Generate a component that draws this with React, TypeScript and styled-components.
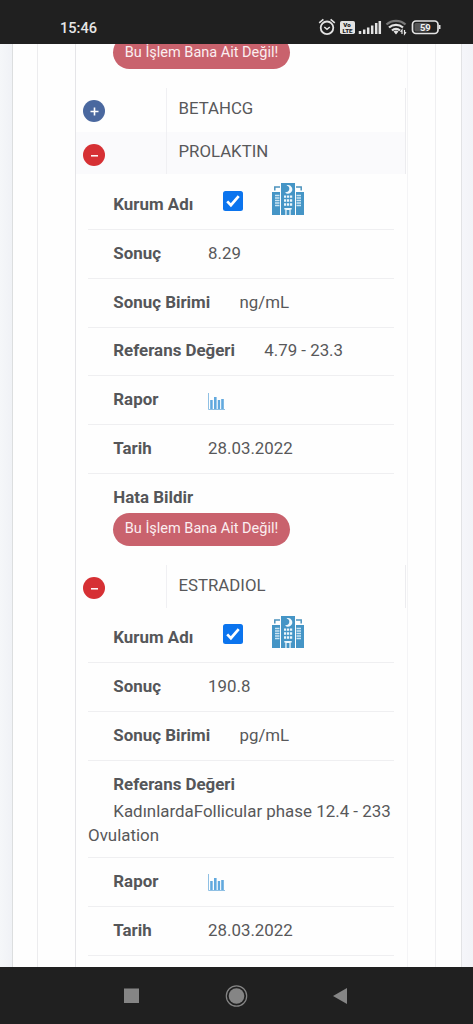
import React from "react";
import styled, { createGlobalStyle } from "styled-components";

const GlobalStyle = createGlobalStyle`
  * { box-sizing: border-box; }
  body { margin: 0; background: #202020; font-family: Roboto, "Liberation Sans", sans-serif; }
`;

const Screen = styled.div`
  width: 473px;
  height: 1024px;
  display: flex;
  flex-direction: column;
  overflow: hidden;
`;

const StatusBar = styled.header`
  height: 44px;
  flex: none;
  background: #202020;
  color: #e6e6e6;
  display: flex;
  justify-content: space-between;
  padding: 18px 31px 0 60px;
`;

const Clock = styled.span`
  font-size: 14.6px;
  font-weight: 500;
  line-height: 20px;
`;

const StatusIcons = styled.div`
  display: flex;
  height: 18px;
`;

const Viewport = styled.main`
  flex: 1;
  min-height: 0;
  overflow: hidden;
  display: flex;
  padding: 0 11px 0 12px;
  background: linear-gradient(90deg, #f5f7f9, #f0f2f6 12px, #f5f6fa 461px, #f2f3f7);
`;

const Card = styled.section`
  flex: 1;
  display: flex;
  padding: 0 25px 0 24px;
  background: #fefefe;
  border-left: 1px solid #dcdedf;
  border-right: 1px solid #e2e3e5;
`;

const Frame = styled.div`
  flex: 1;
  display: flex;
  padding: 0 27px 0 37px;
  border-left: 1px solid #ececee;
  border-right: 1px solid #efeff1;
`;

const Table = styled.div`
  flex: 1;
  min-width: 0;
  border-left: 1px solid #e5e5e8;
  border-right: 1px solid #f4f4f6;
`;

const TestRow = styled.div<{ $height: number; $shaded?: boolean }>`
  height: ${(p) => p.$height}px;
  display: flex;
  margin-right: 1px;
  background: ${(p) => (p.$shaded ? "#fafafc" : "#fefefe")};
  border-right: 1px solid #ececef;
`;

const ToggleCell = styled.div`
  width: 90px;
  flex: none;
  padding: 12px 0 0 7px;
`;

const Toggle = styled.button<{ $open?: boolean }>`
  display: block;
  width: 22px;
  height: 22px;
  padding: 0;
  border: 0;
  border-radius: 50%;
  background: ${(p) => (p.$open ? "#d63034" : "#4a689f")};
  svg { display: block; }
`;

const NameCell = styled.div<{ $top: number }>`
  flex: 1;
  border-left: 1px solid #f0f0f3;
  padding: ${(p) => p.$top}px 0 0 11.5px;
  font-size: 16.8px;
  line-height: 24px;
  color: #58585a;
`;

const Details = styled.div`
  margin: 0 13px 0 12px;
`;

const Item = styled.div<{ $height: number; $drop?: number }>`
  height: ${(p) => p.$height}px;
  display: flex;
  align-items: center;
  gap: 29.3px;
  padding: ${(p) => p.$drop ?? 0}px 0 ${(p) => (p.$drop ? 0 : 2)}px 25.3px;
  border-bottom: 1px solid #efeff1;
`;

const StackedItem = styled.div<{ $height: number; $last?: boolean }>`
  height: ${(p) => p.$height}px;
  padding-top: 11px;
  border-bottom: ${(p) => (p.$last ? 0 : 1)}px solid #efeff1;
`;

const Label = styled.span<{ $indent?: boolean }>`
  display: block;
  min-width: 65.5px;
  margin-left: ${(p) => (p.$indent ? 25.3 : 0)}px;
  font-size: 16.9px;
  line-height: 24px;
  font-weight: 700;
  color: #555659;
  white-space: nowrap;
`;

const Value = styled.span`
  font-size: 16.85px;
  line-height: 24px;
  color: #58585a;
`;

const Paragraph = styled.p`
  margin: 3px -10px 0 0;
  text-indent: 25.3px;
  font-size: 16.92px;
  line-height: 24px;
  color: #58585a;
`;

const DangerButton = styled.button`
  display: block;
  width: 177px;
  height: 33px;
  margin: 4px 0 0 25px;
  padding: 0;
  border: 0;
  border-radius: 17px;
  background: #c9626d;
  color: #fbeef0;
  font: 400 14.5px/20px Roboto, "Liberation Sans", sans-serif;
  white-space: nowrap;
`;

const ClippedItem = styled.div`
  height: 44px;
  overflow: hidden;
  padding: 0 12px;
  display: flex;
  ${DangerButton} { margin-top: -8px; }
`;

const Check = styled.span`
  width: 20px;
  height: 20px;
  margin-bottom: 7px;
  border-radius: 2.5px;
  background: #0b74ee;
  svg { display: block; }
`;

const HospitalSlot = styled.span`
  width: 32px;
  height: 32px;
  margin: 0 0 10px 0.5px;
  svg { display: block; }
`;

const ChartSlot = styled.span`
  width: 18px;
  height: 18px;
  margin: 5px 0 0 -0.5px;
  svg { display: block; }
`;

const NavBar = styled.nav`
  height: 57px;
  flex: none;
  background: #202020;
  display: flex;
  justify-content: space-between;
  padding: 17px 125px 0 123px;
`;

const ToggleButton = ({ open }: { open?: boolean }) => (
  <Toggle $open={open} aria-label={open ? "-" : "+"}>
    <svg width="22" height="22" viewBox="0 0 22 22" stroke="#fff" strokeWidth="1.6">
      {open ? <path d="M8 11.8h7" strokeWidth="1.5" /> : <path d="M7.5 11.5h8M11.5 7.5v8" />}
    </svg>
  </Toggle>
);

const Hospital = () => (
  <HospitalSlot>
    <svg width="32" height="32" viewBox="0 0 32 32">
      <path d="M0 9h8v23H0zM24 9h8v23h-8zM9 0h14v32H9z" fill="#4595c6" />
      <path d="M2.800 7.500V4H8M29.200 7.500V4H24" fill="none" stroke="#4c93bd" strokeWidth="1.5" />
      <path d="M14.500 2.300a4.300 4.300 0 1 1-1.500 7.200 4 4 0 0 0 1.500-7.200z" fill="#f2f9fd" />
      <circle cx="14.200" cy="5.800" r="3.100" fill="#4595c6" />
      <path
        d="M12 12.500h2.200v2.200H12zM15 12.500h2.200v2.200H15zM18 12.500h2.200v2.200H18zM12 16.200h2.200v2.500H12zM15 16.200h2.200v2.500H15zM18 16.200h2.200v2.500H18zM12 20.200h2.200v2.500H12zM15 20.200h2.200v2.500H15zM18 20.200h2.200v2.500H18zM12.300 25h7.400v1.500h-1V32h-1.300v-5h-2.800v5h-1.300v-5.500h-1z"
        fill="#ecf6fb"
      />
      <path
        d="M3 12.500h4.500M3 15h4.500M3 17.500h4.500M3 20h4.500M3 22.500h4.500M24.500 12.500H29M24.500 15H29M24.500 17.500H29M24.500 20H29M24.500 22.500H29"
        stroke="#cbe5f4"
        strokeWidth="1.4"
      />
    </svg>
  </HospitalSlot>
);

const Chart = () => (
  <ChartSlot>
    <svg width="18" height="18" viewBox="0 0 18 18">
      <path d="M.5 0v16.500H17" fill="none" stroke="#8fc0e4" strokeWidth="1" />
      <path d="M2.200 7h2.500v9H2.200zM6 4h2.600v12H6zM9.800 7h2.300v9H9.800zM13.200 6h2.600v10h-2.600z" fill="#62a9de" />
    </svg>
  </ChartSlot>
);

const Institution = ({ height }: { height: number }) => (
  <Item $height={height} $drop={5}>
    <Label>Kurum Adı</Label>
    <Check role="checkbox" aria-checked="true">
      <svg width="20" height="20" viewBox="0 0 20 20">
        <path d="M4.200 10.400l3.700 3.800 7.800-9" fill="none" stroke="#fff" strokeWidth="2.700" />
      </svg>
    </Check>
    <Hospital />
  </Item>
);

const Entry = ({ label, height = 48.8, children }: { label: string; height?: number; children: React.ReactNode }) => (
  <Item $height={height}>
    <Label>{label}</Label>
    {typeof children === "string" ? <Value>{children}</Value> : children}
  </Item>
);

const PhoneIcons = () => (
  <StatusIcons>
    <svg width="124" height="18" viewBox="0 0 124 18" fill="none" stroke="#e3e3e3">
      <circle cx="9" cy="9.800" r="6.300" strokeWidth="1.800" />
      <path d="M6.300 9l2.700 2.300L11.800 9M1.200 4.800l4.200-3.500M16.800 4.800l-4.200-3.500" strokeWidth="1.600" />
      <rect x="22" y="3" width="15" height="13" rx="1.800" fill="#e3e3e3" stroke="none" />
      <text x="29" y="8.800" fill="#202020" stroke="none" fontSize="6.200" fontWeight="900" textAnchor="middle">Vo</text>
      <text x="29.500" y="14.800" fill="#202020" stroke="none" fontSize="6.200" fontWeight="900" textAnchor="middle">LTE</text>
      <path d="M42 16v-3M46.200 16v-4.500M50.200 16V9.500M54.200 16V7.500M58.200 16V5M61.800 16V3" strokeWidth="2.500" />
      <path d="M68.500 6.500a14 14 0 0 1 19 0" stroke="#777" strokeWidth="2.300" />
      <path d="M71 9.500a10.500 10.500 0 0 1 14 0M74 12.500a6 6 0 0 1 8 0" strokeWidth="2.300" />
      <path d="M75.500 13.500a4 4 0 0 1 5 0L78 16.500z" fill="#e3e3e3" stroke="none" />
      <path d="M84 16v-4l-1.500 1.800M86.500 12v4l1.500-1.800" strokeWidth="1.200" />
      <rect x="94.500" y="3" width="25.500" height="12.500" rx="3.400" strokeWidth="1.700" />
      <rect x="96.500" y="5" width="13.500" height="8.500" rx="1.500" fill="#555" stroke="none" />
      <path d="M121.700 7v4" strokeWidth="1.600" />
      <text x="107.300" y="12.700" fill="#f2f2f2" stroke="none" fontSize="9.400" fontWeight="700" textAnchor="middle">59</text>
    </svg>
  </StatusIcons>
);

export default function App() {
  return (
    <Screen>
      <GlobalStyle />
      <StatusBar>
        <Clock>15:46</Clock>
        <PhoneIcons />
      </StatusBar>
      <Viewport>
        <Card>
          <Frame>
            <Table>
              <ClippedItem>
                <DangerButton>Bu İşlem Bana Ait Değil!</DangerButton>
              </ClippedItem>
              <TestRow $height={44}>
                <ToggleCell><ToggleButton /></ToggleCell>
                <NameCell $top={8}>BETAHCG</NameCell>
              </TestRow>
              <TestRow $height={42} $shaded>
                <ToggleCell><ToggleButton open /></ToggleCell>
                <NameCell $top={7}>PROLAKTIN</NameCell>
              </TestRow>
              <Details>
                <Institution height={56} />
                <Entry label="Sonuç">8.29</Entry>
                <Entry label="Sonuç Birimi">ng/mL</Entry>
                <Entry label="Referans Değeri">4.79 - 23.3</Entry>
                <Entry label="Rapor"><Chart /></Entry>
                <Entry label="Tarih">28.03.2022</Entry>
                <StackedItem $height={91} $last>
                  <Label $indent>Hata Bildir</Label>
                  <DangerButton>Bu İşlem Bana Ait Değil!</DangerButton>
                </StackedItem>
              </Details>
              <TestRow $height={43}>
                <ToggleCell><ToggleButton open /></ToggleCell>
                <NameCell $top={8}>ESTRADIOL</NameCell>
              </TestRow>
              <Details>
                <Institution height={55} />
                <Entry label="Sonuç">190.8</Entry>
                <Entry label="Sonuç Birimi">pg/mL</Entry>
                <StackedItem $height={97.4}>
                  <Label $indent>Referans Değeri</Label>
                  <Paragraph>KadınlardaFollicular phase 12.4 - 233 Ovulation</Paragraph>
                </StackedItem>
                <Entry label="Rapor"><Chart /></Entry>
                <Entry label="Tarih">28.03.2022</Entry>
              </Details>
            </Table>
          </Frame>
        </Card>
      </Viewport>
      <NavBar>
        <svg width="225" height="24" viewBox="0 0 225 24" fill="#858585">
          <path d="M1 4.500h15V19H1zM224 4v16l-14-8z" />
          <circle cx="113.500" cy="12" r="7.800" />
          <circle cx="113.500" cy="12" r="10.200" fill="none" stroke="#858585" strokeWidth="1.200" />
        </svg>
      </NavBar>
    </Screen>
  );
}
